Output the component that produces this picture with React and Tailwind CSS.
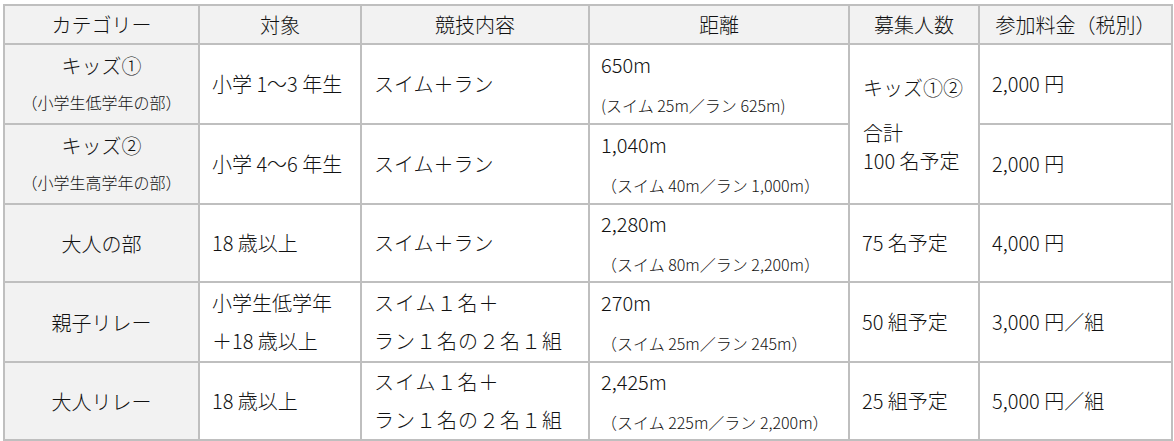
import React from 'react';

const HEAD = ['カテゴリー', '対象', '競技内容', '距離', '募集人数', '参加料金（税別）'];

const cell = 'bg-white flex flex-col justify-center pl-3';
const catCell = 'bg-[#f2f2f2] flex flex-col items-center justify-center';

function Dist({ main, sub }) {
  return (
    <div className={`${cell} pl-[11px] pt-[4px]`}>
      <p className="leading-[38px]">{main}</p>
      <p className="text-[16px] leading-[42px]">{sub}</p>
    </div>
  );
}

function Cat({ main, sub }) {
  return (
    <div className={catCell}>
      <p className="leading-[37px]">{main}</p>
      {sub && <p className="text-[16px] leading-[37px]">{sub}</p>}
    </div>
  );
}

function Two({ a, b, wide }) {
  return (
    <div className={`${cell} ${wide ? 'tracking-[1px]' : ''}`}>
      <p className="leading-[38px]">{a}</p>
      <p className="leading-[38px]">{b}</p>
    </div>
  );
}

function One({ children }) {
  return <div className={cell}><p>{children}</p></div>;
}

export default function App() {
  return (
    <div className="w-[1174px] h-[441px] bg-white pl-[3px] pt-[4px] font-['Noto_Sans_CJK_JP',sans-serif] text-[20px] text-[#111] font-light">
      <div className="grid w-[1170px] grid-cols-[193px_160px_226px_258px_128px_191px] grid-rows-[37px_78px_78px_76px_78px_76px] gap-[2px] p-[2px] bg-[#bfbfbf]">
        {/* 見出し */}
        {HEAD.map((h) => (
          <div key={h} className="bg-[#f2f2f2] flex items-center justify-center">{h}</div>
        ))}

        {/* キッズ① */}
        <Cat main="キッズ①" sub="（小学生低学年の部）" />
        <One>小学 1～3 年生</One>
        <One>スイム＋ラン</One>
        <Dist main="650m" sub="(スイム 25m／ラン 625m)" />
        <div className={`${cell} row-span-2 pl-[13px]`}>
          <p className="leading-[28px] mb-[17px]">キッズ①②</p>
          <p className="leading-[28px]">合計</p>
          <p className="leading-[28px]">100 名予定</p>
        </div>
        <One>2,000 円</One>

        {/* キッズ② */}
        <Cat main="キッズ②" sub="（小学生高学年の部）" />
        <One>小学 4～6 年生</One>
        <One>スイム＋ラン</One>
        <Dist main="1,040m" sub="（スイム 40m／ラン 1,000m）" />
        <One>2,000 円</One>

        {/* 大人の部 */}
        <Cat main="大人の部" />
        <One>18 歳以上</One>
        <One>スイム＋ラン</One>
        <Dist main="2,280m" sub="（スイム 80m／ラン 2,200m）" />
        <One>75 名予定</One>
        <One>4,000 円</One>

        {/* 親子リレー */}
        <Cat main="親子リレー" />
        <Two a="小学生低学年" b="＋18 歳以上" />
        <Two wide a="スイム１名＋" b="ラン１名の２名１組" />
        <Dist main="270m" sub="（スイム 25m／ラン 245m）" />
        <One>50 組予定</One>
        <One>3,000 円／組</One>

        {/* 大人リレー */}
        <Cat main="大人リレー" />
        <One>18 歳以上</One>
        <Two wide a="スイム１名＋" b="ラン１名の２名１組" />
        <Dist main="2,425m" sub="（スイム 225m／ラン 2,200m）" />
        <One>25 組予定</One>
        <One>5,000 円／組</One>
      </div>
    </div>
  );
}
